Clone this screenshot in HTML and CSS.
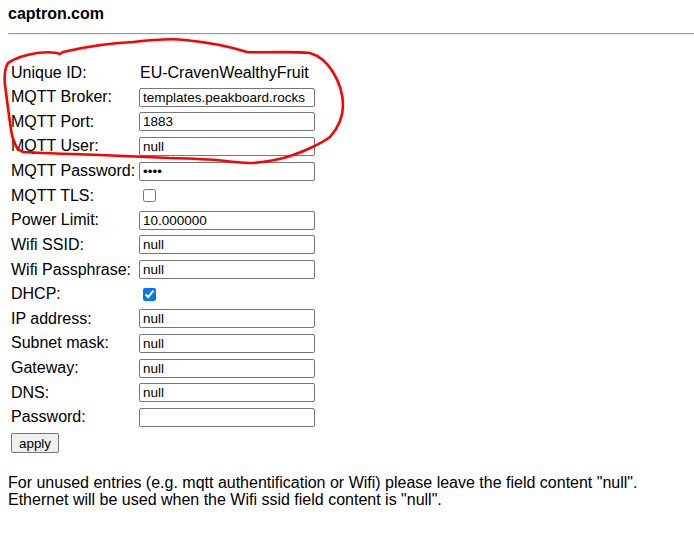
FILE: index.html
```html
<!DOCTYPE html>
<html>
<head>
<meta charset="utf-8">
<title>captron.com</title>
<link rel="stylesheet" href="styles.css">
</head>
<body>
<div class="title">captron.com</div>
<hr class="rule">
<form class="settings">
  <div class="grid">
    <label class="lbl">Unique ID:</label><span class="val">EU-CravenWealthyFruit</span>
    <label class="lbl">MQTT Broker:</label><span><input class="field" type="text" value="templates.peakboard.rocks"></span>
    <label class="lbl">MQTT Port:</label><span><input class="field" type="text" value="1883"></span>
    <label class="lbl">MQTT User:</label><span><input class="field" type="text" value="null"></span>
    <label class="lbl">MQTT Password:</label><span><input class="field" type="password" value="null"></span>
    <label class="lbl">MQTT TLS:</label><span><input class="check" type="checkbox"></span>
    <label class="lbl">Power Limit:</label><span><input class="field" type="text" value="10.000000"></span>
    <label class="lbl">Wifi SSID:</label><span><input class="field" type="text" value="null"></span>
    <label class="lbl">Wifi Passphrase:</label><span><input class="field" type="text" value="null"></span>
    <label class="lbl">DHCP:</label><span><input class="check" type="checkbox" checked></span>
    <label class="lbl">IP address:</label><span><input class="field" type="text" value="null"></span>
    <label class="lbl">Subnet mask:</label><span><input class="field" type="text" value="null"></span>
    <label class="lbl">Gateway:</label><span><input class="field" type="text" value="null"></span>
    <label class="lbl">DNS:</label><span><input class="field" type="text" value="null"></span>
    <label class="lbl">Password:</label><span><input class="field" type="password" value=""></span>
  </div>
  <button class="apply" type="button">apply</button>
</form>
<p class="note">For unused entries (e.g. mqtt authentification or Wifi) please leave the field content "null".<br>Ethernet will be used when the Wifi ssid field content is "null".</p>
<svg class="scribble" width="694" height="545" viewBox="0 0 694 545">
  <path d="M8 63 C14 59 24 55 37 53 C45 52 55 52 60 54 L63 52 C80 48 110 43 133 42 C150 40 170 38 185 40 C205 42 225 45 247 52 C260 53 290 51 310 53 C320 56 328 64 333 72 C339 82 343 95 343 105 C343 117 338 128 330 137 C322 143 305 151 293 155 C282 159 262 163 250 163 C238 163 225 161 217 160 C200 159 180 158 170 158 C150 157 120 156 100 155 C70 154 40 153 23 152 C17 150 14 145 12 135 C10 125 7 100 5 85 C4 76 5 68 8 63" fill="none" stroke="#ff0000" stroke-width="2.6" stroke-linejoin="round" stroke-linecap="round"/>
</svg>
</body>
</html>
```

FILE: styles.css
```css
html, body {
  background: #ffffff;
}
body {
  margin: 0;
  padding: 5px 0 8px 8px;
  font-family: "Liberation Sans", Arial, sans-serif;
  font-size: 16px;
  color: #000;
  overflow: hidden;
}
.title {
  font-weight: bold;
  font-size: 16px;
  line-height: 18px;
  height: 28px;
}
.rule {
  margin: 0;
  border: 0;
  border-top: 1px solid #9a9a9a;
  border-bottom: 1px solid #eeeeee;
  height: 0;
}
.settings {
  margin: 0;
  padding-top: 25.2px;
}
.grid {
  display: grid;
  grid-template-columns: 128px 190px;
  grid-auto-rows: 24.64px;
  align-items: center;
  padding-left: 3px;
}
.lbl {
  line-height: 18px;
  white-space: nowrap;
}
.val {
  padding-left: 1px;
  line-height: 18px;
}
.grid > span {
  display: flex;
  align-items: center;
}
.field {
  box-sizing: border-box;
  width: 176px;
  height: 19px;
  margin: 0;
  padding: 0 3px;
  border: 1px solid #767676;
  border-radius: 2px;
  font-family: "Liberation Sans", Arial, sans-serif;
  font-size: 13.5px;
  color: #000;
  background: #fff;
}
.check {
  width: 13px;
  height: 13px;
  margin: 0 0 0 4px;
  accent-color: #0075ff;
}
.apply {
  display: block;
  box-sizing: border-box;
  margin: 3.5px 0 0 3px;
  width: 48px;
  height: 20px;
  padding: 0;
  border: 1px solid #767676;
  border-radius: 2px;
  background: #efefef;
  font-family: "Liberation Sans", Arial, sans-serif;
  font-size: 13.33px;
  color: #000;
}
.note {
  margin: 21px 0 0 0;
  line-height: 17px;
  font-size: 16px;
}
.scribble {
  position: absolute;
  left: 0;
  top: 0;
  pointer-events: none;
}
```
